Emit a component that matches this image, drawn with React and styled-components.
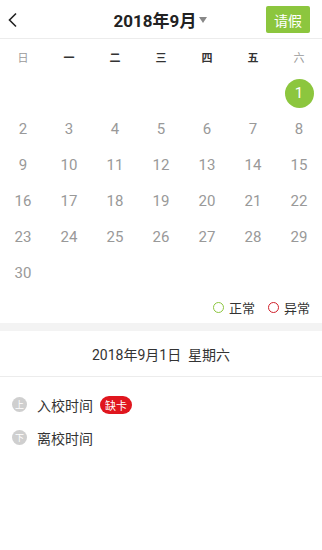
import React from 'react';
import styled, { createGlobalStyle } from 'styled-components';

const GlobalStyle = createGlobalStyle`
  html, body {
    margin: 0;
    padding: 0;
    background: #ffffff;
  }
  body {
    font-family: Roboto, 'Noto Sans CJK SC', sans-serif;
    color: #333333;
  }
`;

const weekdays = [
  { label: '日', weekend: true },
  { label: '一' },
  { label: '二' },
  { label: '三' },
  { label: '四' },
  { label: '五' },
  { label: '六', weekend: true },
];

// September 2018 starts on a Saturday
const buildDays = () => {
  const cells = [];
  for (let i = 0; i < 6; i++) cells.push(null);
  for (let d = 1; d <= 30; d++) cells.push(d);
  while (cells.length % 7) cells.push(null);
  return cells;
};

const App = () => {
  const days = buildDays();

  return (
    <Page>
      <GlobalStyle />
      <Header>
        <BackButton aria-label="back">
          <svg width="12" height="16" viewBox="0 0 12 16">
            <path d="M9 1.5 L2.5 8 L9 14.5" fill="none" stroke="#222" strokeWidth="1.6" />
          </svg>
        </BackButton>
        <Title>
          2018年9月
          <Caret />
        </Title>
        <LeaveButton>请假</LeaveButton>
      </Header>

      <WeekRow>
        {weekdays.map((w) => (
          <WeekCell key={w.label} $weekend={w.weekend}>{w.label}</WeekCell>
        ))}
      </WeekRow>

      <DayGrid>
        {days.map((d, i) => (
          <DayCell key={i}>
            {d && <DayNum $selected={d === 1}>{d}</DayNum>}
          </DayCell>
        ))}
      </DayGrid>

      <Legend>
        <LegendItem>
          <Ring $color="#8cc63e" />正常
        </LegendItem>
        <LegendItem>
          <Ring $color="#d0202a" />异常
        </LegendItem>
      </Legend>

      <Divider />

      <DateTitle>2018年9月1日&nbsp;&nbsp;星期六</DateTitle>

      <RecordList>
        <Record>
          <RecordIcon>上</RecordIcon>
          <RecordLabel>入校时间</RecordLabel>
          <Badge>缺卡</Badge>
        </Record>
        <Record>
          <RecordIcon>下</RecordIcon>
          <RecordLabel>离校时间</RecordLabel>
        </Record>
      </RecordList>
    </Page>
  );
};

export default App;

const Page = styled.div`
  width: 322px;
  min-height: 550px;
  background: #ffffff;
`;

const Header = styled.div`
  height: 38px;
  display: flex;
  align-items: center;
  justify-content: space-between;
  padding: 0 12px 0 7px;
  border-bottom: 1px solid #ececec;
  box-sizing: content-box;
`;

const BackButton = styled.div`
  width: 44px;
  display: flex;
  align-items: center;
  padding-top: 1px;
`;

const Title = styled.div`
  display: flex;
  align-items: center;
  font-family: Roboto, 'Noto Sans CJK SC', sans-serif;
  font-size: 17px;
  font-weight: 700;
  color: #222222;
  margin-left: 4px;
`;

const Caret = styled.span`
  width: 0;
  height: 0;
  margin-left: 3px;
  margin-top: 1px;
  border-left: 4.5px solid transparent;
  border-right: 4.5px solid transparent;
  border-top: 6px solid #888888;
`;

const LeaveButton = styled.div`
  width: 44px;
  height: 27px;
  margin-top: 1px;
  display: flex;
  align-items: center;
  justify-content: center;
  background: #8cc63e;
  color: #ffffff;
  border-radius: 2px;
  font-family: 'Noto Sans CJK SC', sans-serif;
  font-size: 14px;
`;

const WeekRow = styled.div`
  display: grid;
  grid-template-columns: repeat(7, 1fr);
  height: 36px;
  align-items: center;
`;

const WeekCell = styled.div`
  text-align: center;
  font-family: 'Noto Sans CJK SC', sans-serif;
  font-size: 11px;
  font-weight: ${(p) => (p.$weekend ? 400 : 700)};
  color: ${(p) => (p.$weekend ? '#9a9a9a' : '#333333')};
`;

const DayGrid = styled.div`
  display: grid;
  grid-template-columns: repeat(7, 1fr);
  grid-auto-rows: 36px;
`;

const DayCell = styled.div`
  display: flex;
  align-items: center;
  justify-content: center;
`;

const DayNum = styled.div`
  width: 29px;
  height: 29px;
  display: flex;
  align-items: center;
  justify-content: center;
  border-radius: 50%;
  font-family: Roboto, sans-serif;
  font-size: 15px;
  color: ${(p) => (p.$selected ? '#ffffff' : '#999999')};
  background: ${(p) => (p.$selected ? '#8cc63e' : 'transparent')};
`;

const Legend = styled.div`
  height: 32px;
  display: flex;
  align-items: center;
  justify-content: flex-end;
  gap: 13px;
  padding-right: 12px;
`;

const LegendItem = styled.div`
  display: flex;
  align-items: center;
  gap: 5px;
  font-family: 'Noto Sans CJK SC', sans-serif;
  font-size: 13px;
  color: #333333;
`;

const Ring = styled.span`
  width: 9px;
  height: 9px;
  border-radius: 50%;
  border: 1.3px solid ${(p) => p.$color};
`;

const Divider = styled.div`
  height: 8px;
  background: #f3f3f3;
`;

const DateTitle = styled.div`
  height: 45px;
  display: flex;
  align-items: center;
  justify-content: center;
  border-bottom: 1px solid #ececec;
  font-family: Roboto, 'Noto Sans CJK SC', sans-serif;
  font-size: 14px;
  color: #333333;
`;

const RecordList = styled.div`
  padding-top: 11px;
`;

const Record = styled.div`
  height: 33px;
  display: flex;
  align-items: center;
  padding-left: 12px;
`;

const RecordIcon = styled.span`
  width: 15px;
  height: 15px;
  border-radius: 50%;
  background: #cfcfcf;
  color: #ffffff;
  font-family: 'Noto Sans CJK SC', sans-serif;
  font-size: 9px;
  display: flex;
  align-items: center;
  justify-content: center;
  margin-right: 10px;
`;

const RecordLabel = styled.span`
  font-family: 'Noto Sans CJK SC', sans-serif;
  font-size: 14px;
  color: #333333;
`;

const Badge = styled.span`
  margin-left: 7px;
  height: 18px;
  padding: 0 5px;
  border-radius: 9px;
  background: #e0161e;
  color: #ffffff;
  font-family: 'Noto Sans CJK SC', sans-serif;
  font-size: 11px;
  display: flex;
  align-items: center;
`;
